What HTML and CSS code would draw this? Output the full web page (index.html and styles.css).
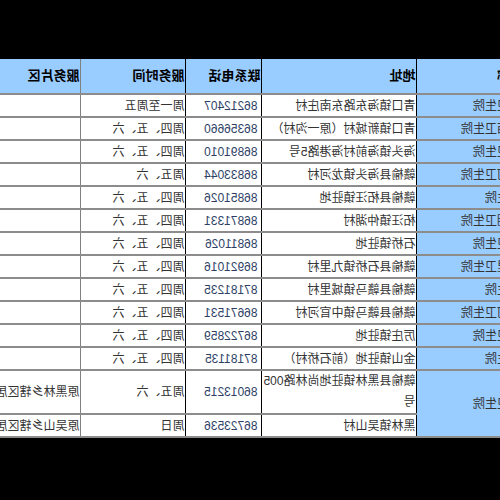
FILE: index.html
```html
<!DOCTYPE html>
<html lang="zh">
<head>
<meta charset="utf-8">
<title>卫生院服务信息表</title>
<link rel="stylesheet" href="styles.css">
</head>
<body>
<div class="sheet">
  <table class="grid">
    <colgroup>
      <col class="c-name"><col class="c-addr"><col class="c-tel"><col class="c-time"><col class="c-area">
    </colgroup>
    <thead>
      <tr>
        <th class="name">单位名称</th>
        <th class="addr">地址</th>
        <th class="tel">联系电话</th>
        <th class="time">服务时间</th>
        <th class="area">服务片区</th>
      </tr>
    </thead>
    <tbody>
      <tr><td class="name">青口镇卫生院</td><td class="addr">青口镇海东路东南庄村</td><td class="tel">86212407</td><td class="time">周一至周五</td><td class="area"></td></tr>
      <tr><td class="name">青口城西卫生院</td><td class="addr">青口镇新城村（原一沟村）</td><td class="tel">86356660</td><td class="time">周四、五、六</td><td class="area"></td></tr>
      <tr><td class="name">海头镇卫生院</td><td class="addr">海头镇海前村海港路5号</td><td class="tel">86891010</td><td class="time">周四、五、六</td><td class="area"></td></tr>
      <tr><td class="name">海头龙河卫生院</td><td class="addr">赣榆县海头镇龙河村</td><td class="tel">86833044</td><td class="time">周五、六</td><td class="area"></td></tr>
      <tr><td class="name">柘汪卫生院</td><td class="addr">赣榆县柘汪镇驻地</td><td class="tel">86851026</td><td class="time">周四、五、六</td><td class="area"></td></tr>
      <tr><td class="name">柘汪仲湖卫生院</td><td class="addr">柘汪镇仲湖村</td><td class="tel">86871331</td><td class="time">周四、五、六</td><td class="area"></td></tr>
      <tr><td class="name">石桥镇卫生院</td><td class="addr">石桥镇驻地</td><td class="tel">86811026</td><td class="time">周四、五、六</td><td class="area"></td></tr>
      <tr><td class="name">石桥九里卫生院</td><td class="addr">赣榆县石桥镇九里村</td><td class="tel">86921016</td><td class="time">周四、五、六</td><td class="area"></td></tr>
      <tr><td class="name">赣马卫生院</td><td class="addr">赣榆县赣马镇城里村</td><td class="tel">87181235</td><td class="time">周四、五、六</td><td class="area"></td></tr>
      <tr><td class="name">赣马官河卫生院</td><td class="addr">赣榆县赣马镇中官河村</td><td class="tel">86671531</td><td class="time">周四、五、六</td><td class="area"></td></tr>
      <tr><td class="name">厉庄镇卫生院</td><td class="addr">厉庄镇驻地</td><td class="tel">86722859</td><td class="time">周四、五、六</td><td class="area"></td></tr>
      <tr><td class="name">金山卫生院</td><td class="addr">金山镇驻地（前石桥村）</td><td class="tel">87181135</td><td class="time">周四、五、六</td><td class="area"></td></tr>
      <tr class="tall"><td class="name" rowspan="2">黑林镇卫生院</td><td class="addr wrap">赣榆县黑林镇驻地尚林路005号</td><td class="tel">86013215</td><td class="time">周五、六</td><td class="area">原黑林乡辖区居民</td></tr>
      <tr><td class="addr">黑林镇吴山村</td><td class="tel">86723536</td><td class="time">周日</td><td class="area">原吴山乡辖区居民</td></tr>
    </tbody>
  </table>
</div>
</body>
</html>
```
FILE: styles.css
```css
html, body {
  margin: 0;
  padding: 0;
  background: #000;
}

.sheet {
  width: 500px;
  height: 500px;
  overflow: hidden;
  transform: scaleX(-1);
}

.grid {
  border-collapse: collapse;
  table-layout: fixed;
  width: 640px;
  margin: 59px 0 0 -50px;
  font-family: "Liberation Sans", "Noto Sans CJK SC", sans-serif;
  font-size: 12px;
  color: #333;
}

.c-name { width: 133px; }
.c-addr { width: 155px; }
.c-tel { width: 76px; }
.c-time { width: 105px; }
.c-area { width: 171px; }

.grid th,
.grid td {
  padding: 0 0 0 1px;
  white-space: nowrap;
  overflow: hidden;
  text-align: left;
  vertical-align: middle;
  line-height: 14px;
  border-bottom: 2px solid #8c8c8c;
  background: #fff;
}

.grid th {
  height: 34px;
  font-size: 13px;
  font-weight: bold;
  color: #000;
  background: #99ccff;
}

.grid td {
  height: 21px;
}

.grid .name {
  background: #99ccff;
  border-right: 1px solid #000;
}

.grid td.name {
  padding-left: 5px;
}

.grid .addr,
.grid .tel {
  border-right: 1px solid #000;
}

.grid td.tel {
  padding-left: 4px;
  color: #2e3f66;
}

.grid .time {
  border-right: 1px solid #808080;
}

.grid .tall td {
  height: 38px;
}

.grid td.wrap {
  white-space: normal;
  line-height: 21px;
}
```
